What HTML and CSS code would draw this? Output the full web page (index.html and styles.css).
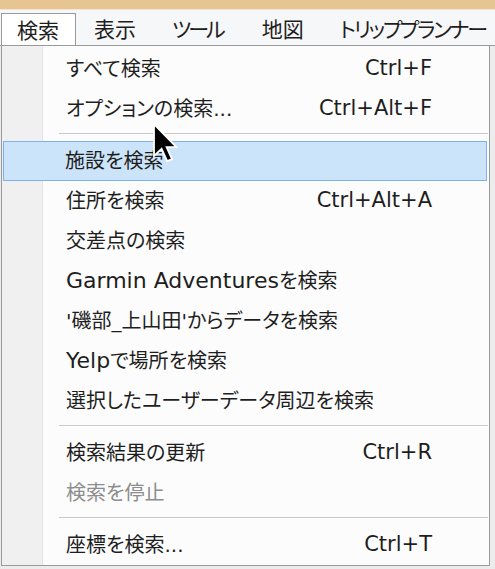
FILE: index.html
```html
<!DOCTYPE html>
<html lang="ja">
<head>
  <meta charset="UTF-8" />
  <meta name="viewport" content="width=device-width, initial-scale=1.0" />
  <title>検索メニュー</title>
  <link rel="stylesheet" href="styles.css">
</head>
<body>
  <div class="titlebar"></div>

  <nav class="menubar">
    <span class="menubar-item active">検索</span>
    <span class="menubar-item">表示</span>
    <span class="menubar-item kana">ツール</span>
    <span class="menubar-item">地図</span>
    <span class="menubar-item kana narrow">トリッププランナー</span>
  </nav>

  <div class="menu">
    <ul class="menu-list">
      <li class="menu-item"><span class="label">すべて検索</span><span class="shortcut">Ctrl+F</span></li>
      <li class="menu-item"><span class="label">オプションの検索...</span><span class="shortcut">Ctrl+Alt+F</span></li>
      <li class="separator"></li>
      <li class="menu-item hover"><span class="label">施設を検索</span></li>
      <li class="menu-item"><span class="label">住所を検索</span><span class="shortcut">Ctrl+Alt+A</span></li>
      <li class="menu-item"><span class="label">交差点の検索</span></li>
      <li class="menu-item"><span class="label"><span class="latin">Garmin Adventures</span>を検索</span></li>
      <li class="menu-item"><span class="label">'磯部_上山田'からデータを検索</span></li>
      <li class="menu-item"><span class="label"><span class="latin">Yelp</span>で場所を検索</span></li>
      <li class="menu-item"><span class="label">選択したユーザーデータ周辺を検索</span></li>
      <li class="separator"></li>
      <li class="menu-item"><span class="label">検索結果の更新</span><span class="shortcut">Ctrl+R</span></li>
      <li class="menu-item disabled"><span class="label">検索を停止</span></li>
      <li class="separator"></li>
      <li class="menu-item"><span class="label">座標を検索...</span><span class="shortcut">Ctrl+T</span></li>
    </ul>
  </div>

  <!-- mouse pointer over the menu -->
  <svg class="cursor" width="26" height="42" viewBox="0 0 13 21">
    <path d="M1 1 L1 17 L4.8 13.4 L7.6 19.6 L10 18.6 L7.3 12.6 L12.2 12.6 Z"
          fill="#000" stroke="#fff" stroke-width="0.9" stroke-linejoin="miter"/>
  </svg>
</body>
</html>
```

FILE: styles.css
```css
:root {
  --text-color: #1e1e1e;
  --disabled-color: #8d8d8d;
  --border-color: #9a9a9a;
  --gutter-bg: #f0f0f0;
  --menu-bg: #fcfcfc;
  --bar-bg: #f6f7f8;
  --hover-bg: #cce4f9;
  --hover-border: #7db2e6;
}

body {
  margin: 0;
  width: 495px;
  height: 569px;
  overflow: hidden;
  background-color: #ececec;
  color: var(--text-color);
  font-family: "DejaVu Sans", "Noto Sans CJK JP", sans-serif;
  font-feature-settings: "palt";
  position: relative;
}

.titlebar {
  height: 9px;
  background-color: #e7c592;
  border-bottom: 1px solid #f3e4cc;
}

.menubar {
  display: flex;
  height: 35px;
  overflow: hidden;
  background-color: var(--bar-bg);
  border-bottom: 1px solid var(--border-color);
  font-size: 21px;
  line-height: 1;
  white-space: nowrap;
}

.menubar-item {
  display: flex;
  align-items: center;
  flex-shrink: 0;
  padding: 2px 17px 0;
  margin-top: 3px;
  border: 1px solid transparent;
  border-bottom: none;
}

.menubar-item.kana {
  letter-spacing: -3px;
  padding-right: 20px;
}

.menubar-item.narrow {
  letter-spacing: -2.2px;
  padding-right: 0;
}

.menubar-item.active {
  margin-left: 1px;
  padding: 2px 16px 0 15px;
  background-color: #fff;
  border-color: var(--border-color);
  margin-bottom: -1px;
}

.menu {
  width: 487px;
  height: 519px;
  margin-left: 1px;
  border: 1px solid var(--border-color);
  border-top: none;
  background: linear-gradient(to right,
    var(--gutter-bg) 0, var(--gutter-bg) 40px,
    #e4e4e4 40px, #e4e4e4 41px,
    var(--menu-bg) 41px);
}

.menu-list {
  list-style: none;
  margin: 0;
  padding: 3px 0 0;
  font-size: 20px;
}

.menu-item {
  display: flex;
  align-items: center;
  justify-content: space-between;
  height: 40px;
  padding: 0 57px 3px 64px;
  box-sizing: border-box;
  white-space: nowrap;
}

.menu-item .latin {
  font-size: 22px;
}

.menu-item .shortcut {
  font-size: 21px;
}

.menu-item.hover {
  margin: 0 2px 0 1px;
  padding-left: 61px;
  background-color: var(--hover-bg);
  border: 1px solid var(--hover-border);
}

.menu-item.disabled {
  color: var(--disabled-color);
}

.separator {
  height: 1px;
  margin: 4px 1px 6px 57px;
  background-color: #c9c9c9;
  border-bottom: 1px solid #fff;
}

.cursor {
  position: absolute;
  left: 152px;
  top: 122px;
}
```
